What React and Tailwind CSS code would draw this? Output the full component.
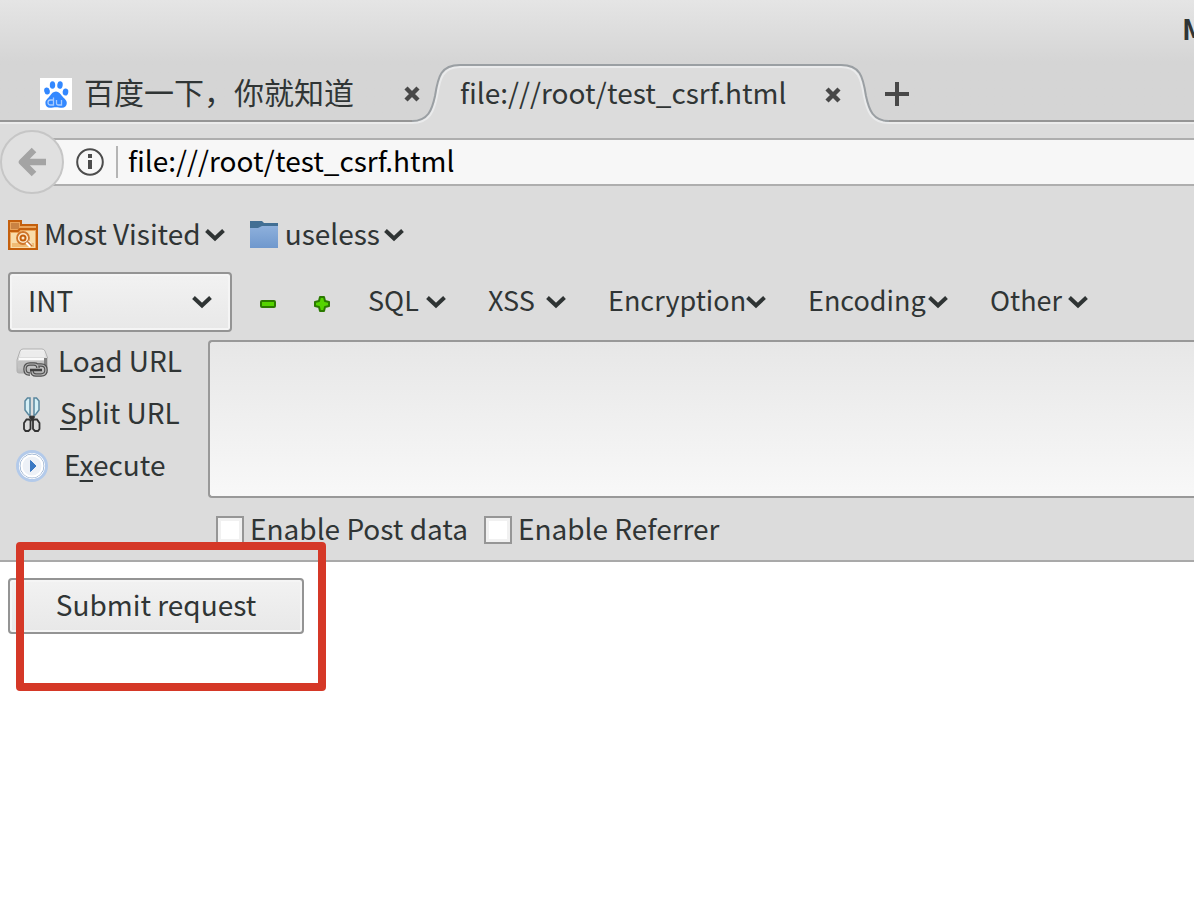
import React from "react";

function Chevron() {
  return (
    <svg className="h-[14px] w-5 shrink-0" viewBox="0 0 20 14" fill="none" aria-hidden="true">
      <path d="M1.5 2.5 10 10.5 18.500 2.500" stroke="#2f3434" strokeWidth="4" />
    </svg>
  );
}

function CloseIcon() {
  return (
    <svg className="size-4" viewBox="0 0 16 16" fill="none" aria-hidden="true">
      <path d="M2 2 14 14M14 2 2 14" stroke="#484848" strokeWidth="4.400" />
    </svg>
  );
}

function PawIcon() {
  return (
    <svg className="size-8 shrink-0 bg-white" viewBox="0 0 32 32" aria-hidden="true">
      <g fill="#3388ff">
        <ellipse cx="12.500" cy="7" rx="2.700" ry="3.800" />
        <ellipse cx="20" cy="7" rx="2.700" ry="3.800" transform="rotate(8 20 7)" />
        <ellipse cx="7" cy="13" rx="2.800" ry="3.500" transform="rotate(-12 7 13)" />
        <ellipse cx="25.500" cy="14" rx="2.800" ry="3.500" transform="rotate(8 25.500 14)" />
        <path d="M16 13.500c3 0 4.300 2.300 5.800 4.300 1.800 2.200 5 4.200 5 7.200 0 3-2.100 4.700-4.800 4.700-2.400 0-4-.5-6-.5s-3.800.6-6 .6c-2.700 0-4.600-1.800-4.600-4.800 0-3.200 3-4.800 4.600-7.200 1.600-2.100 3-4.300 6-4.300z" />
      </g>
      <g fill="none" stroke="#a9ccff" strokeWidth="1.300">
        <path d="M13.500 19.500v7.500h-3a2.300 2.300 0 0 1 0-5h3M16.500 22v3.600q0 1.400 1.500 1.400h3.500v-5" />
      </g>
    </svg>
  );
}

function MostVisitedIcon() {
  return (
    <svg className="size-[30px] shrink-0" viewBox="0 0 30 30" aria-hidden="true">
      <path d="M1 29V1h12v4h16v24z" fill="#eba55b" stroke="#c45f0c" strokeWidth="2" />
      <path d="M3 3h8v6H3z" fill="#c98343" />
      <path d="M2 11h8l2-2h16" stroke="#c45f0c" strokeWidth="2" fill="none" />
      <path d="M3 28V13h8l2-2h14v17z" fill="#f9dca9" />
      <path d="M4 23h22v4H4z" fill="#f0bb74" />
      <circle cx="15" cy="18" r="6" fill="#fbe9cc" stroke="#d0762b" strokeWidth="1.800" />
      <circle cx="15" cy="18" r="2.500" fill="none" stroke="#c45f0c" strokeWidth="2" />
      <path d="m19 22 4 4" stroke="#fff" strokeWidth="4" />
      <path d="m19 21 5 5" stroke="#c77432" strokeWidth="1.500" />
    </svg>
  );
}

function FolderIcon() {
  return (
    <svg className="size-[30px] shrink-0" viewBox="0 0 30 30" aria-hidden="true">
      <defs>
        <linearGradient id="folder" x1="0" y1="0" x2="0" y2="1">
          <stop offset="0" stopColor="#8eb0dc" />
          <stop offset="1" stopColor="#6f98cd" />
        </linearGradient>
      </defs>
      <path d="M1 1h12l2 2h14v8H1z" fill="#426f94" />
      <path d="M1 8h8l4-2h16v22H1z" fill="url(#folder)" />
    </svg>
  );
}

function PrinterIcon() {
  return (
    <svg className="size-8 shrink-0" viewBox="0 0 32 32" aria-hidden="true">
      <defs>
        <linearGradient id="printer" x1="0" y1="0" x2="0" y2="1">
          <stop offset="0" stopColor="#f4f4f4" />
          <stop offset="1" stopColor="#b4b4b4" />
        </linearGradient>
      </defs>
      <path d="M7 3h19q2 0 3 2l3 8v12q0 2-2 2H3q-2 0-2-2V14l3-9q1-2 3-2z" fill="url(#printer)" stroke="#b0b0b0" />
      <path d="M6 5h21l2 6H4z" fill="#ececec" />
      <path d="M3 13h26" stroke="#fafafa" strokeWidth="2" />
      <path d="M2 15h28v6H2z" fill="#c2c2c2" />
      <path d="M28 12h3v9h-3z" fill="#808080" />
      <g fill="none">
        <path d="M14 28h-1q-4 0-4-5t5-5h4q4 0 4 4M20 19h5q5 0 5 5t-5 5h-5q-4 0-4-4" stroke="#4f4f4f" strokeWidth="3.500" />
        <path d="M14 28h-1q-4 0-4-5t5-5h4q4 0 4 4M20 19h5q5 0 5 5t-5 5h-5q-4 0-4-4" stroke="#b9b9b9" strokeWidth="1.200" />
        <path d="M14 24h12" stroke="#3f3f3f" strokeWidth="2.500" />
      </g>
    </svg>
  );
}

function ScissorsIcon() {
  return (
    <svg className="h-9 w-8 shrink-0" viewBox="0 0 32 36" fill="none" aria-hidden="true">
      <path d="M11.500 2h2.500v18l-2-2-3-4V5zM18 2h2.500L23 5v9l-3 4-2 2z" fill="#d6f0f6" stroke="#5a879e" strokeWidth="1.500" />
      <path d="M14 20l2 3 2-3" stroke="#333" strokeWidth="3" />
      <path d="M13.500 23.500h-3L8 27v6l1.500 2h3l2-2v-8.500zM18 23.500h3l2.500 3.500v6L22 35h-3l-2-2v-8.500z" stroke="#333" strokeWidth="1.800" />
    </svg>
  );
}

function ExecuteIcon() {
  return (
    <svg className="size-8 shrink-0" viewBox="0 0 32 32" aria-hidden="true">
      <circle cx="16" cy="16" r="14.500" fill="#fff" stroke="#b3caea" strokeWidth="3" />
      <circle cx="16" cy="16" r="11.800" fill="#edf1f7" stroke="#86a2c6" strokeWidth="1" />
      <circle cx="16" cy="16" r="10.500" fill="none" stroke="#fff" strokeWidth="2" />
      <path d="M14.500 10.500l5.500 5.500-5.500 5.500z" fill="#3a78c3" stroke="#3a78c3" />
    </svg>
  );
}

function TabCurve({ flip }) {
  return (
    <svg
      className={flip ? "h-[60px] w-12 shrink-0 -scale-x-100" : "h-[60px] w-12 shrink-0"}
      viewBox="0 0 48 60"
      fill="none"
      aria-hidden="true"
    >
      <path d="M0 60V58C16 58 20 46 23 32C26 13 29 2 48 2V60z" fill="#dcdcdc" />
      <path d="M0 59C18 59 22 47 25 32C28 14 31 3 48 3" stroke="#eaebec" strokeWidth="2" />
      <path d="M0 57C16 57 20 46 23 32C26 12 29 1 48 1" stroke="#9a9fa3" strokeWidth="2" />
    </svg>
  );
}

function FolderMenu({ icon, label }) {
  return (
    <button type="button" className="flex items-center gap-1.5">
      {icon}
      <span className="flex items-center gap-1">
        <span className="pb-1">{label}</span>
        <Chevron />
      </span>
    </button>
  );
}

function ActionButton({ icon, gap, children }) {
  return (
    <button type="button" className={`flex h-10 items-center ${gap}`}>
      {icon}
      <span className="pb-1">{children}</span>
    </button>
  );
}

function Key({ children }) {
  return <u className="decoration-2 underline-offset-4">{children}</u>;
}

function Check({ label }) {
  return (
    <label className="flex items-center gap-1.5">
      <input
        type="checkbox"
        className="size-7 appearance-none border-2 border-[#969696] bg-white shadow-[inset_0_0_0_3px_#f1f1f1]"
      />
      <span className="pb-1">{label}</span>
    </label>
  );
}

const menus = [
  { label: "SQL", width: "w-[78px]" },
  { label: "XSS", width: "w-[78px]" },
  { label: "Encryption", width: "w-[158px]" },
  { label: "Encoding", width: "w-[140px]" },
  { label: "Other", width: "w-[98px]" },
];

export default function App() {
  return (
    <div className="min-h-screen overflow-hidden whitespace-nowrap bg-white font-['Noto_Sans_CJK_SC',sans-serif] text-[28px] leading-10 text-[#303535]">
      <header className="bg-linear-to-b from-[#e5e5e5] to-[#d5d5d5] to-50%">
        <div className="flex h-16 justify-end pt-2">
          <h1 className="w-3 overflow-hidden font-bold">M</h1>
        </div>
        <nav className="flex h-[60px]">
          <div className="flex w-[412px] shrink-0 flex-col">
            <div className="flex flex-1 items-center gap-3 pt-1 pl-10">
              <PawIcon />
              <a href="#baidu" className="flex-1 pb-1.5 text-[30px]">百度一下，你就知道</a>
            </div>
            <div className="h-1 border-t-2 border-[#959595] bg-[#ebebeb]" />
          </div>
          <div className="-mx-2 flex w-4 shrink-0 items-center">
            <button type="button" aria-label="Close tab"><CloseIcon /></button>
          </div>
          <div className="flex shrink-0">
            <TabCurve />
            <div className="flex w-[381px] items-center justify-between border-t-2 border-[#9a9fa3] bg-[#dcdcdc] shadow-[inset_0_2px_0_#eaebec]">
              <a href="#csrf" className="pb-1.5">file:///root/test_csrf.html</a>
              <button type="button" aria-label="Close tab"><CloseIcon /></button>
            </div>
            <TabCurve flip />
          </div>
          <div className="-ml-1 flex flex-1 flex-col">
            <div className="flex flex-1 items-center pt-1">
              <button type="button" aria-label="New tab">
                <svg className="size-6" viewBox="0 0 24 24" aria-hidden="true">
                  <path d="M0 12h24M12 0v24" stroke="#484848" strokeWidth="4" />
                </svg>
              </button>
            </div>
            <div className="h-1 border-t-2 border-[#959595] bg-[#ebebeb]" />
          </div>
        </nav>
      </header>

      <section className="border-b-2 border-[#a9a9a9] bg-[#dcdcdc]">
        <div className="flex items-center pt-1.5">
          <button
            type="button"
            aria-label="Back"
            className="z-10 flex size-16 shrink-0 items-center justify-center rounded-full border-2 border-[#c6c6c6] bg-[#e0e0e0]"
          >
            <svg className="size-8" viewBox="0 0 32 32" fill="none" aria-hidden="true">
              <path d="M18 4 6 16l12 12M6 16h24" stroke="#a4a4a4" strokeWidth="6.500" strokeLinejoin="round" />
            </svg>
          </button>
          <div className="-ml-3 flex h-12 flex-1 items-center border-y-2 border-[#aeaeae] bg-[#f7f7f7] pl-6">
            <svg className="size-7 shrink-0" viewBox="0 0 28 28" fill="none" aria-hidden="true">
              <circle cx="14" cy="14" r="12.800" stroke="#4c4c4c" strokeWidth="2" />
              <path d="M14 12v9M14 6v4" stroke="#4c4c4c" strokeWidth="4" />
            </svg>
            <div className="mr-2.5 ml-3 h-8 w-0.5 bg-[#b5b5b5]" />
            <input
              aria-label="Address"
              defaultValue="file:///root/test_csrf.html"
              className="h-11 min-w-0 flex-1 bg-transparent pb-1 text-black outline-none"
            />
          </div>
        </div>

        <div className="flex h-[78px] items-center gap-6 pt-1 pl-2">
          <FolderMenu icon={<MostVisitedIcon />} label="Most Visited" />
          <FolderMenu icon={<FolderIcon />} label="useless" />
        </div>

        <div className="flex h-[60px] items-center pl-2">
          <div className="grid w-56 shrink-0 items-center">
            <select
              aria-label="Injection type"
              className="col-start-1 row-start-1 h-[60px] appearance-none rounded border-2 border-[#949494] bg-linear-to-b from-[#f2f2f2] to-[#e8e8e8] pb-1 pl-[18px] shadow-[inset_0_0_0_2px_#f5f5f5]"
            >
              <option>INT</option>
            </select>
            <span className="pointer-events-none col-start-1 row-start-1 mr-5 flex justify-self-end">
              <Chevron />
            </span>
          </div>
          <div className="flex gap-[38px] pt-1 pr-[38px] pl-7">
            <button type="button" aria-label="Remove">
              <svg className="size-4" viewBox="0 0 16 16" aria-hidden="true">
                <rect x="1" y="5" width="14" height="6" rx="1" fill="#55d400" stroke="#2b7a00" strokeWidth="2" />
              </svg>
            </button>
            <button type="button" aria-label="Add">
              <svg className="size-4" viewBox="0 0 16 16" aria-hidden="true">
                <path d="M6 1h4l1 4 4 1v4l-4 1-1 4H6l-1-4-4-1V6l4-1z" fill="#55d400" stroke="#2b7a00" strokeWidth="2" strokeLinejoin="round" />
              </svg>
            </button>
          </div>
          <div className="flex gap-[42px] text-[27px]">
            {menus.map(({ label, width }) => (
              <button key={label} type="button" className={`flex items-center justify-between ${width}`}>
                <span className="pb-1">{label}</span>
                <Chevron />
              </button>
            ))}
          </div>
        </div>

        <div className="flex pt-2">
          <div className="flex w-52 shrink-0 flex-col gap-3 pt-0.5 pl-4">
            <ActionButton icon={<PrinterIcon />} gap="gap-2.5">Lo<Key>a</Key>d URL</ActionButton>
            <ActionButton icon={<ScissorsIcon />} gap="gap-3"><Key>S</Key>plit URL</ActionButton>
            <ActionButton icon={<ExecuteIcon />} gap="gap-4">E<Key>x</Key>ecute</ActionButton>
          </div>
          <textarea
            aria-label="URL"
            className="h-[158px] min-w-0 flex-1 resize-none rounded-l border-2 border-r-0 border-[#999] bg-linear-to-b from-[#e7e7e7] to-[#f8f8f8] outline-none"
          />
        </div>

        <div className="flex h-[62px] items-center gap-4 pt-0.5 pl-[216px]">
          <Check label="Enable Post data" />
          <Check label="Enable Referrer" />
        </div>
      </section>

      <main className="relative px-2 py-4">
        <button
          type="button"
          className="h-14 w-[296px] rounded border-2 border-[#949494] bg-linear-to-b from-[#f2f2f2] to-[#e8e8e8] pb-1 shadow-[inset_0_0_0_2px_#f5f5f5]"
        >
          Submit request
        </button>
        <div className="pointer-events-none absolute -top-5 left-4 h-[149px] w-[310px] rounded border-8 border-[#d53827]" />
      </main>
    </div>
  );
}
